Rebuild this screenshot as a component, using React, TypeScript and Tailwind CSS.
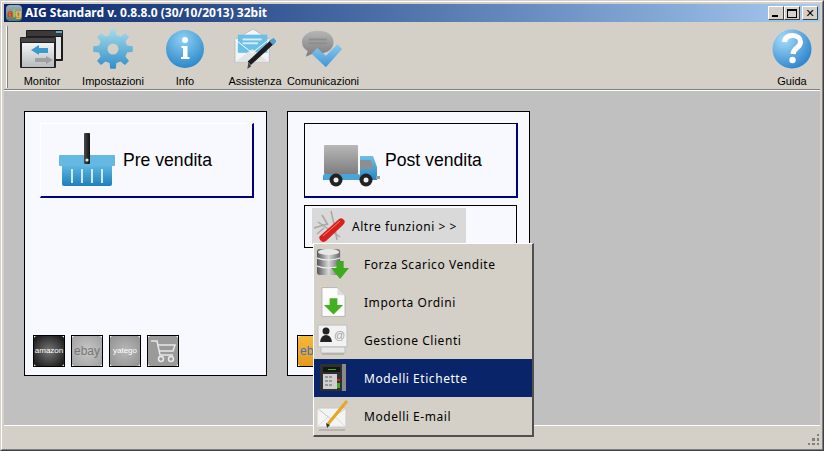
function gearPoints(cx: number, cy: number, outer: number, inner: number, teeth: number) {
  const pts: string[] = [];
  const step = (Math.PI * 2) / teeth;
  for (let i = 0; i < teeth; i++) {
    const a = i * step - Math.PI / 2;
    [
      [a - step * 0.3, inner],
      [a - step * 0.18, outer],
      [a + step * 0.18, outer],
      [a + step * 0.3, inner],
    ].forEach(([t, r]) => pts.push(`${(cx + Math.cos(t) * r).toFixed(1)},${(cy + Math.sin(t) * r).toFixed(1)}`));
  }
  return pts.join(" ");
}

function MonitorIcon() {
  return (
    <svg width="44" height="40" viewBox="0 0 44 40">
      <defs>
        <linearGradient id="monFront" x1="0" y1="0" x2="0" y2="1">
          <stop offset="0" stopColor="#f2f4f5" />
          <stop offset="1" stopColor="#b9bcbd" />
        </linearGradient>
      </defs>
      <rect x="6" y="1" width="37" height="31" rx="1" fill="#1c1c1c" />
      <rect x="7" y="2" width="35" height="5" fill="#3a3a3a" />
      <rect x="8" y="8" width="33" height="22" fill="#e2e4e5" />
      <rect x="36" y="2" width="6" height="2" fill="#5aa8d8" />
      <rect x="0" y="8" width="36" height="31" rx="1" fill="#222" />
      <rect x="1" y="9" width="34" height="4" fill="#444" />
      <rect x="2" y="14" width="32" height="24" fill="url(#monFront)" />
      <path d="M11 21 L19 16 V19 H28 V24 H19 V26 Z" fill="#3a9ad0" />
      <path d="M33 31 L26 27 V29 H15 V33 H26 V35 Z" fill="#a0a0a0" />
    </svg>
  );
}

function GearIcon() {
  return (
    <svg width="40" height="40" viewBox="0 0 40 40">
      <defs>
        <linearGradient id="gearFill" x1="0" y1="0" x2="0" y2="1">
          <stop offset="0" stopColor="#a6dbe9" />
          <stop offset="1" stopColor="#2f8fc9" />
        </linearGradient>
      </defs>
      <polygon points={gearPoints(20, 20, 20, 14.5, 8)} fill="url(#gearFill)" />
      <circle cx="20" cy="20" r="5.5" fill="#d4d0c8" />
    </svg>
  );
}

function InfoIcon() {
  return (
    <svg width="40" height="40" viewBox="0 0 40 40">
      <defs>
        <radialGradient id="infoFill" cx="0.45" cy="0.25" r="0.85">
          <stop offset="0" stopColor="#8fd0f2" />
          <stop offset="1" stopColor="#1f7fc6" />
        </radialGradient>
      </defs>
      <circle cx="20" cy="20" r="19" fill="url(#infoFill)" />
      <circle cx="20" cy="11" r="3" fill="#fff" />
      <path d="M16.5 17 H22.5 V28 H24.5 V30 H16 V28 H18 V19 H16.5 Z" fill="#fff" />
    </svg>
  );
}

function AssistenzaIcon() {
  return (
    <svg width="42" height="42" viewBox="0 0 44 44">
      <path d="M1 12 L20 1 L37 12 V36 H1 Z" fill="#f2f4f5" stroke="#b8bcbe" strokeWidth="1" />
      <rect x="4" y="7" width="31" height="19" fill="#6cc0e8" />
      <rect x="9" y="11" width="20" height="2" fill="#d4eef9" />
      <rect x="9" y="15" width="16" height="2" fill="#d4eef9" />
      <path d="M1 36 L19 22 L37 36 Z" fill="#e2e5e6" />
      <path d="M1 12 L19 26 L37 12" fill="none" stroke="#fff" strokeWidth="1" />
      <path d="M41 14 L16 37" stroke="#1c1c1c" strokeWidth="5" strokeLinecap="butt" />
      <path d="M43 12 L39 16" stroke="#4aa0d8" strokeWidth="5" />
      <path d="M18 40 L14 43 L15 36 Z" fill="#444" />
    </svg>
  );
}

function ComunicazioniIcon() {
  return (
    <svg width="42" height="40" viewBox="0 0 44 40">
      <defs>
        <linearGradient id="bubbleFill" x1="0" y1="0" x2="0" y2="1">
          <stop offset="0" stopColor="#b5b5b5" />
          <stop offset="1" stopColor="#7d7d7d" />
        </linearGradient>
        <linearGradient id="checkFill" x1="0" y1="0" x2="0" y2="1">
          <stop offset="0" stopColor="#8cc8ee" />
          <stop offset="1" stopColor="#3f97d8" />
        </linearGradient>
      </defs>
      <path d="M17 1 C27 1 33 6 33 13 C33 20 27 25 17 25 L11 25 L4 28 L6 22 C2 20 0 17 0 13 C0 6 7 1 17 1 Z" fill="url(#bubbleFill)" />
      <rect x="7" y="9" width="19" height="2" fill="#8e8e8e" />
      <rect x="7" y="13" width="19" height="2" fill="#8e8e8e" />
      <path d="M10 25 L16 19 L25 27 L37 15 L42 20 L25 39 Z" fill="url(#checkFill)" />
    </svg>
  );
}

function GuidaIcon() {
  return (
    <svg width="40" height="40" viewBox="0 0 40 40">
      <defs>
        <radialGradient id="helpFill" cx="0.3" cy="0.25" r="0.9">
          <stop offset="0" stopColor="#a6dcf9" />
          <stop offset="1" stopColor="#1f7bc8" />
        </radialGradient>
      </defs>
      <circle cx="20" cy="20" r="19.5" fill="url(#helpFill)" />
      <path d="M12.5 13 C13 8.5 16 6.5 20.5 6.5 C25.5 6.5 28.5 9.5 28.5 13 C28.5 19 21.5 18.5 21 25" fill="none" stroke="#fff" strokeWidth="5" />
      <circle cx="20.5" cy="31" r="3.2" fill="#fff" />
    </svg>
  );
}

function BasketIcon() {
  return (
    <svg width="57" height="54" viewBox="0 0 57 54">
      <defs>
        <linearGradient id="basketBody" x1="0" y1="0" x2="0" y2="1">
          <stop offset="0" stopColor="#5cb6e2" />
          <stop offset="1" stopColor="#1f7fbb" />
        </linearGradient>
        <linearGradient id="handleFill" x1="0" y1="0" x2="1" y2="0">
          <stop offset="0" stopColor="#4a4a4a" />
          <stop offset="1" stopColor="#111" />
        </linearGradient>
      </defs>
      <rect x="0" y="22" width="56" height="11" rx="1" fill="#64b8e2" />
      <path d="M3 33 H53 V51 Q53 53 51 53 H5 Q3 53 3 51 Z" fill="url(#basketBody)" />
      <rect x="12" y="36" width="2" height="14" fill="#cfeaf6" />
      <rect x="22" y="36" width="2" height="14" fill="#cfeaf6" />
      <rect x="32" y="36" width="2" height="14" fill="#cfeaf6" />
      <rect x="42" y="36" width="2" height="14" fill="#cfeaf6" />
      <rect x="25" y="0" width="6" height="31" rx="1" fill="url(#handleFill)" />
      <circle cx="28" cy="27" r="1.6" fill="#e8e8e8" />
    </svg>
  );
}

function TruckIcon() {
  return (
    <svg width="58" height="42" viewBox="0 0 58 42" className="mt-[12px]">
      <defs>
        <linearGradient id="truckBox" x1="0" y1="0" x2="0" y2="1">
          <stop offset="0" stopColor="#b8b8b8" />
          <stop offset="1" stopColor="#7e7e7e" />
        </linearGradient>
        <linearGradient id="truckCab" x1="0" y1="0" x2="0" y2="1">
          <stop offset="0" stopColor="#6cc0e8" />
          <stop offset="1" stopColor="#2a85c2" />
        </linearGradient>
      </defs>
      <rect x="1" y="0" width="34" height="29" rx="1" fill="url(#truckBox)" />
      <path d="M37 11 H50 L54 22 V35 H0 V31 H37 Z" fill="url(#truckCab)" />
      <rect x="0" y="29" width="37" height="6" rx="2" fill="#4aa4d8" />
      <path d="M37 16 Q37 15 39 15 H48 L50 24 H37 Z" fill="#8a8f92" />
      <rect x="53" y="31" width="4" height="3" fill="#9a9a9a" />
      <circle cx="13" cy="35" r="6.5" fill="#222" />
      <circle cx="13" cy="35" r="2.5" fill="#eee" />
      <circle cx="43" cy="35" r="6.5" fill="#222" />
      <circle cx="43" cy="35" r="2.5" fill="#eee" />
    </svg>
  );
}

function KnifeIcon() {
  return (
    <svg width="34" height="32" viewBox="0 0 34 32">
      <g stroke="#a8a8a8" strokeWidth="1.5" fill="none">
        <path d="M5 12 L27 27" />
        <path d="M1 18 L14 14" />
        <path d="M18 1 L21 14" />
        <path d="M9 5 L15 15" />
        <path d="M4 24 L11 18" />
        <path d="M22 19 L24 30" />
      </g>
      <path d="M7 26 L26 9 Q29 7 31 10 Q33 12 30 15 L13 31 Q10 33 8 31 Q5 28 7 26 Z" fill="#d8201c" />
      <path d="M10 26 L27 11" stroke="#f28a80" strokeWidth="1" />
    </svg>
  );
}

function DatabaseIcon() {
  return (
    <svg width="32" height="30" viewBox="0 0 36 30" preserveAspectRatio="none">
      <defs>
        <linearGradient id="dbFill" x1="0" y1="0" x2="1" y2="0">
          <stop offset="0" stopColor="#555" />
          <stop offset="0.5" stopColor="#d8d8d8" />
          <stop offset="1" stopColor="#666" />
        </linearGradient>
      </defs>
      <rect x="0" y="0" width="26" height="26" rx="3" fill="url(#dbFill)" />
      <ellipse cx="13" cy="3" rx="12" ry="3" fill="#e8e8e8" />
      <path d="M0 9 Q13 13 26 9 M0 17 Q13 21 26 17" stroke="#f2f2f2" strokeWidth="1.2" fill="none" />
      <path d="M22 12 H30 V19 H36 L26 30 L16 19 H22 Z" fill="#3fa91f" />
    </svg>
  );
}

function DocArrowIcon() {
  return (
    <svg width="25" height="32" viewBox="0 0 26 32">
      <path d="M1 1 H17 L25 9 V31 H1 Z" fill="#fcfcfc" stroke="#b4b4b0" />
      <path d="M17 1 V9 H25 Z" fill="#dedede" />
      <path d="M9 12 H17 V19 H23 L13 29 L3 19 H9 Z" fill="#43b01f" />
    </svg>
  );
}

function ClientsIcon() {
  return (
    <svg width="32" height="32" viewBox="0 0 32 32">
      <rect x="1" y="1" width="29" height="22" rx="1" fill="#f2f2f2" stroke="#bcbcbc" />
      <circle cx="9" cy="7" r="3.500" fill="#222" />
      <path d="M3 18 Q4 11 9 11 Q14 11 15 18 Z" fill="#222" />
      <text x="17" y="15" fontSize="11" fill="#a0a0a0" fontFamily="'Liberation Sans', sans-serif">@</text>
      <rect x="4" y="23" width="24" height="6" fill="#e8e8e8" stroke="#bcbcbc" />
      <rect x="5" y="29" width="22" height="2" fill="#b8b4ac" />
    </svg>
  );
}

function LabelsIcon() {
  return (
    <svg width="26" height="28" viewBox="0 0 26 28">
      <rect x="0" y="0" width="26" height="27" rx="1" fill="#303030" />
      <rect x="22" y="0" width="4" height="27" fill="#8a8a8a" />
      <rect x="3" y="3" width="17" height="5" fill="#151515" />
      <rect x="8" y="5" width="8" height="1" fill="#43b01f" />
      <rect x="3" y="10" width="14" height="15" fill="#cfcfcf" />
      <g fill="#999">
        <rect x="5" y="12" width="3" height="2" />
        <rect x="9" y="12" width="3" height="2" />
        <rect x="5" y="16" width="3" height="2" />
        <rect x="9" y="16" width="3" height="2" />
        <rect x="5" y="20" width="3" height="2" />
        <rect x="9" y="20" width="3" height="2" />
      </g>
      <rect x="17" y="15" width="3" height="2" fill="#d02020" />
      <rect x="17" y="19" width="3" height="5" fill="#3fa91f" />
    </svg>
  );
}

function MailIcon() {
  return (
    <svg width="32" height="32" viewBox="0 0 32 32">
      <rect x="0" y="8" width="29" height="19" fill="#f4f4f4" stroke="#c8c8c8" />
      <path d="M0 8 L14 19 L29 8" fill="none" stroke="#c8c8c8" />
      <path d="M0 27 L11 17 M29 27 L18 17" stroke="#dcdcdc" />
      <path d="M30 1 L11 24" stroke="#e9a620" strokeWidth="3" />
      <path d="M10 28 L9 23 L13 25 Z" fill="#333" />
      <rect x="2" y="29" width="26" height="2" fill="#b8b4ac" />
    </svg>
  );
}

function SmallCart() {
  return (
    <svg width="26" height="24" viewBox="0 0 26 24" fill="none" stroke="#e8e8e8" strokeWidth="1.5">
      <path d="M1 2 H7 L10 16 H23 M8 6 H25 L23 12 H9" />
      <circle cx="11" cy="20" r="2.500" />
      <circle cx="21" cy="20" r="2.500" />
    </svg>
  );
}

function AppGlyph() {
  return (
    <div className="w-4 h-4 rounded-sm bg-gradient-to-b from-[#9fb0b8] to-[#4f7f68] flex items-center justify-center text-[11px] font-bold leading-none tracking-[-1px] font-['Liberation_Sans',sans-serif]">
      <span className="text-[#ff3020]">a</span>
      <span className="text-[#60e060]">l</span>
      <span className="text-[#ffb030]">g</span>
    </div>
  );
}

function CaptionButton({ children, className }: { children: React.ReactNode; className?: string }) {
  return (
    <div className={`w-4 h-[14px] bg-[#d4d0c8] border-t border-l border-t-white border-l-white border-r border-b border-r-[#404040] border-b-[#404040] relative flex items-center justify-center ${className ?? ""}`}>
      {children}
    </div>
  );
}

function ToolItem({ label, width, className, children }: { label: string; width: string; className?: string; children: React.ReactNode }) {
  return (
    <div className={`flex flex-col items-center shrink-0 ${width} ${className ?? ""}`}>
      <div className="h-[47px] flex items-center justify-center">{children}</div>
      <span className="text-[11px] leading-[13px] text-black mt-[3px] whitespace-nowrap font-['Liberation_Sans',sans-serif]">{label}</span>
    </div>
  );
}

function SmallTile({ bg, children }: { bg: string; children: React.ReactNode }) {
  return (
    <div className="w-8 h-8 border border-black bg-white">
      <div className={`w-full h-full rounded-[3px] flex items-center justify-center overflow-hidden ${bg}`}>
        {children}
      </div>
    </div>
  );
}

function MenuItem({ label, active, children }: { label: string; active?: boolean; children: React.ReactNode }) {
  return (
    <div className={`h-[38px] flex items-center ${active ? "bg-[#0a246a] text-white" : "text-black"}`}>
      <div className="w-[38px] mr-[12px] flex items-center justify-center shrink-0">{children}</div>
      <span className="text-[12px] tracking-[0.55px] whitespace-nowrap pt-[1px] font-['Noto_Sans',sans-serif]">{label}</span>
    </div>
  );
}

export default function App() {
  return (
    <div className="relative w-[824px] h-[451px] overflow-hidden font-['DejaVu_Sans',sans-serif]">
      <div className="w-full h-full bg-[#d4d0c8] border border-t-[#d4d0c8] border-l-[#d4d0c8] border-r-[#404040] border-b-[#404040]">
        <div className="w-full h-full border border-t-white border-l-white border-r-[#808080] border-b-[#808080] p-[2px] flex flex-col">
          {/* Title bar */}
          <div className="h-[18px] shrink-0 flex items-center pl-[2px] pr-[2px] bg-gradient-to-r from-[#0a246a] to-[#a6caf0]">
            <AppGlyph />
            <span className="ml-[3px] text-white text-[12px] font-bold whitespace-nowrap font-['Noto_Sans',sans-serif]">
              AIG Standard v. 0.8.8.0 (30/10/2013) 32bit
            </span>
            <div className="ml-auto flex items-center">
              <CaptionButton>
                <div className="w-[6px] h-[2px] bg-black absolute bottom-[2px] left-[3px]" />
              </CaptionButton>
              <CaptionButton>
                <div className="w-[10px] h-[9px] border border-black border-t-2" />
              </CaptionButton>
              <CaptionButton className="ml-[2px]">
                <span className="text-[11px] leading-none font-bold text-black">✕</span>
              </CaptionButton>
            </div>
          </div>

          {/* Toolbar */}
          <div className="h-[69px] shrink-0 flex items-start border-b border-b-white shadow-[inset_0_-1px_0_#808080] pt-[3px] relative">
            <div className="w-[2px] h-[62px] bg-[#808080] border-l border-l-white ml-[2px] mt-[1px] shrink-0" />
            <ToolItem label="Monitor" width="w-[68px]"><MonitorIcon /></ToolItem>
            <ToolItem label="Impostazioni" width="w-[74px]"><GearIcon /></ToolItem>
            <ToolItem label="Info" width="w-[70px]"><InfoIcon /></ToolItem>
            <ToolItem label="Assistenza" width="w-[70px]"><AssistenzaIcon /></ToolItem>
            <ToolItem label="Comunicazioni" width="w-[66px]"><ComunicazioniIcon /></ToolItem>
            <ToolItem label="Guida" width="w-[56px]" className="ml-auto"><GuidaIcon /></ToolItem>
          </div>

          {/* Main area */}
          <div className="flex-1 bg-[#c0c0c0] pt-[20px] pl-[20px] flex gap-[20px] items-start">
            <div className="w-[243px] h-[265px] border border-black bg-[#f8f8ff] flex flex-col">
              <div className="ml-[15px] mt-[11px] w-[214px] h-[75px] border-r-2 border-b-2 border-r-[#000080] border-b-[#000080] border-t border-l border-t-white border-l-white flex items-center pl-[18px]">
                <BasketIcon />
                <span className="ml-[7px] text-[17.6px] text-black font-['Liberation_Sans',sans-serif]">Pre vendita</span>
              </div>
              <div className="mt-auto pb-[8px] pl-[8px] flex gap-[6px]">
                <SmallTile bg="bg-[radial-gradient(circle,#777,#111)]">
                  <span className="text-[8px] text-white font-['Liberation_Sans',sans-serif]">amazon</span>
                </SmallTile>
                <SmallTile bg="bg-[radial-gradient(circle,#c8c8c8,#a0a0a0)]">
                  <span className="text-[12px] text-[#777] font-['Liberation_Sans',sans-serif]">ebay</span>
                </SmallTile>
                <SmallTile bg="bg-[radial-gradient(circle,#b8b8b8,#909090)]">
                  <span className="text-[8px] text-white font-['Liberation_Sans',sans-serif]">yatego</span>
                </SmallTile>
                <SmallTile bg="bg-[#9a9a9a]"><SmallCart /></SmallTile>
              </div>
            </div>

            <div className="w-[243px] h-[265px] border border-black bg-[#f8f8ff] flex flex-col">
              <div className="ml-[16px] mt-[11px] w-[214px] h-[75px] border border-black border-r-2 border-b-2 border-r-[#000080] border-b-[#000080] flex items-center pl-[18px]">
                <TruckIcon />
                <span className="ml-[4px] text-[17.6px] text-black font-['Liberation_Sans',sans-serif]">Post vendita</span>
              </div>
              <div className="ml-[16px] mt-[7px] w-[213px] h-[43px] border border-black pl-[7px] pt-[2px]">
                <div className="w-[154px] h-[36px] bg-[#d9d9d9] flex items-center pl-[1px]">
                  <KnifeIcon />
                  <span className="ml-[5px] pt-[2px] text-[12px] tracking-[0.55px] text-black whitespace-nowrap font-['Noto_Sans',sans-serif]">Altre funzioni &gt; &gt;</span>
                </div>
              </div>
              <div className="mt-auto pb-[8px] pl-[9px] flex">
                <SmallTile bg="bg-gradient-to-b from-[#f5b93a] to-[#e29a1c]">
                  <span className="text-[12px] text-[#3a70c8] font-['Liberation_Sans',sans-serif]">ebay</span>
                </SmallTile>
              </div>
            </div>
          </div>

          {/* Status bar */}
          <div className="h-[22px] shrink-0 border-t border-t-white relative">
            <div className="absolute right-[1px] bottom-[2px] w-[11px] h-[11px] grid grid-cols-3 grid-rows-3 gap-[2px]">
              <i /><i /><i className="bg-[#808080]" />
              <i /><i className="bg-[#808080]" /><i className="bg-[#808080]" />
              <i className="bg-[#808080]" /><i className="bg-[#808080]" /><i className="bg-[#808080]" />
            </div>
          </div>
        </div>
      </div>

      {/* Popup menu */}
      <div className="absolute left-[313px] top-[243px] w-[221px] h-[194px] bg-[#d4d0c8] border-t border-l border-t-white border-l-white border-r-2 border-b-2 border-r-[#505050] border-b-[#505050] pt-[1px]">
        <MenuItem label="Forza Scarico Vendite"><DatabaseIcon /></MenuItem>
        <MenuItem label="Importa Ordini"><DocArrowIcon /></MenuItem>
        <MenuItem label="Gestione Clienti"><ClientsIcon /></MenuItem>
        <MenuItem label="Modelli Etichette" active><LabelsIcon /></MenuItem>
        <MenuItem label="Modelli E-mail"><MailIcon /></MenuItem>
      </div>
    </div>
  );
}
